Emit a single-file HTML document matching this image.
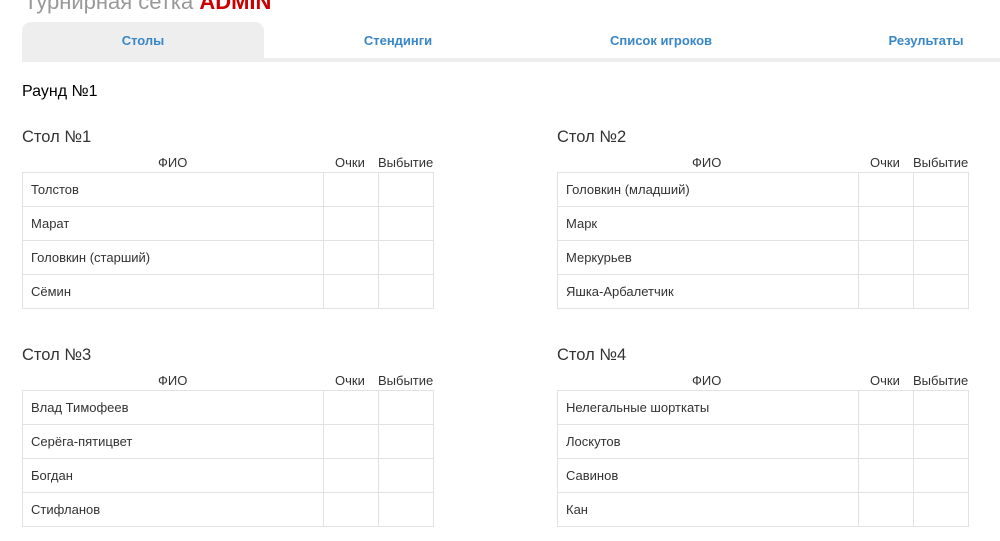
<!DOCTYPE html>
<html><head><meta charset="utf-8"><style>
body{margin:0;width:1000px;height:541px;overflow:hidden;background:#fff;font-family:"Liberation Sans","Noto Sans CJK SC",sans-serif;color:#333;position:relative}
.t{position:absolute;white-space:nowrap}
.title{left:24px;top:-11px;font-size:22px;color:#999;line-height:26px}
.title b{color:#c00}
.tabbar{position:absolute;left:22px;top:58px;width:978px;height:4px;background:#eee}
.act{position:absolute;left:22px;top:22px;width:242px;height:38px;background:#eee;border-radius:9px 9px 0 0}
.tab{position:absolute;top:33px;font-size:13px;font-weight:bold;color:#3a87c8;transform:translateX(-50%)}
h3{position:absolute;margin:0;font-weight:normal;font-size:16.5px;color:#333;white-space:nowrap}
.hd{position:absolute;font-size:13px;color:#333}
table{position:absolute;border-collapse:collapse;font-size:13px}
td{border:1px solid #e2e2e2;height:34px;padding:0 0 0 8px;box-sizing:border-box}
</style></head><body>
<div class="t title">Турнирная сетка <b>ADMIN</b></div>
<div class="act"></div><div class="tabbar"></div>
<div class="tab" style="left:143px">Столы</div>
<div class="tab" style="left:398px">Стендинги</div>
<div class="tab" style="left:661px">Список игроков</div>
<div class="tab" style="left:926px">Результаты</div>
<h3 style="left:22px;top:83px;font-size:16px;color:#000">Раунд №1</h3>

<h3 style="left:22px;top:128px">Стол №1</h3>
<div class="hd" style="left:158px;top:155px">ФИО</div><div class="hd" style="left:335px;top:155px">Очки</div><div class="hd" style="left:378px;top:155px">Выбытие</div>
<table style="left:22px;top:172px"><tr><td style="width:301px">Толстов</td><td style="width:55px"></td><td style="width:55px"></td></tr><tr><td>Марат</td><td></td><td></td></tr><tr><td>Головкин (старший)</td><td></td><td></td></tr><tr><td>Сёмин</td><td></td><td></td></tr></table>

<h3 style="left:557px;top:128px">Стол №2</h3>
<div class="hd" style="left:692px;top:155px">ФИО</div><div class="hd" style="left:870px;top:155px">Очки</div><div class="hd" style="left:913px;top:155px">Выбытие</div>
<table style="left:557px;top:172px"><tr><td style="width:301px">Головкин (младший)</td><td style="width:55px"></td><td style="width:55px"></td></tr><tr><td>Марк</td><td></td><td></td></tr><tr><td>Меркурьев</td><td></td><td></td></tr><tr><td>Яшка-Арбалетчик</td><td></td><td></td></tr></table>

<h3 style="left:22px;top:346px">Стол №3</h3>
<div class="hd" style="left:158px;top:373px">ФИО</div><div class="hd" style="left:335px;top:373px">Очки</div><div class="hd" style="left:378px;top:373px">Выбытие</div>
<table style="left:22px;top:390px"><tr><td style="width:301px">Влад Тимофеев</td><td style="width:55px"></td><td style="width:55px"></td></tr><tr><td>Серёга-пятицвет</td><td></td><td></td></tr><tr><td>Богдан</td><td></td><td></td></tr><tr><td>Стифланов</td><td></td><td></td></tr></table>

<h3 style="left:557px;top:346px">Стол №4</h3>
<div class="hd" style="left:692px;top:373px">ФИО</div><div class="hd" style="left:870px;top:373px">Очки</div><div class="hd" style="left:913px;top:373px">Выбытие</div>
<table style="left:557px;top:390px"><tr><td style="width:301px">Нелегальные шорткаты</td><td style="width:55px"></td><td style="width:55px"></td></tr><tr><td>Лоскутов</td><td></td><td></td></tr><tr><td>Савинов</td><td></td><td></td></tr><tr><td>Кан</td><td></td><td></td></tr></table>
</body></html>
